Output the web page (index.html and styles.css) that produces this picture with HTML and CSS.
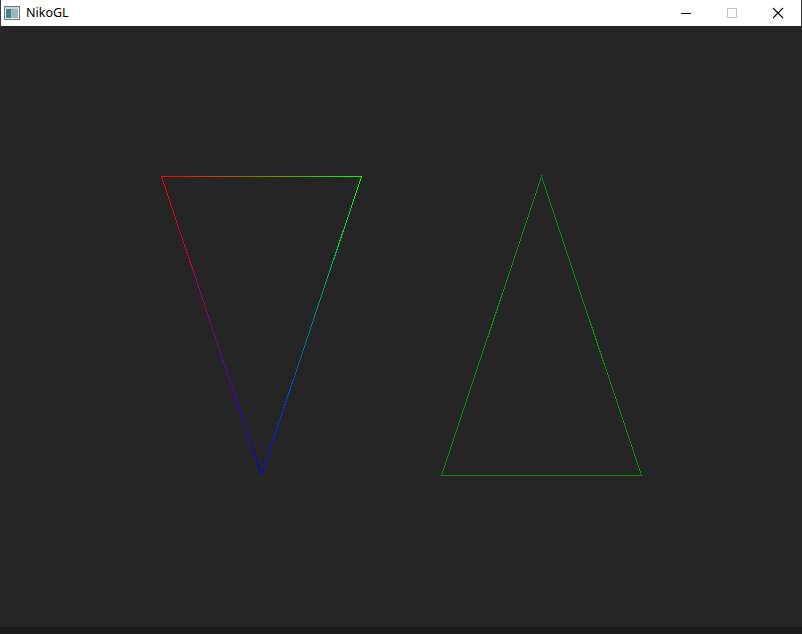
FILE: index.html
```html
<!DOCTYPE html>
<html>
<head>
<meta charset="utf-8">
<title>NikoGL</title>
<link rel="stylesheet" href="styles.css">
</head>
<body>
<div class="window">
  <div class="titlebar">
    <div class="app">
      <svg class="app-icon" width="16" height="14" viewBox="0 0 16 14">
        <rect x="0.5" y="0.5" width="15" height="13" fill="#e8eef0" stroke="#6d7b80"/>
        <rect x="2" y="3" width="5" height="9" fill="#3d8a8a"/>
        <rect x="7" y="3" width="7" height="9" fill="#9fb6c0"/>
        <rect x="1" y="1" width="14" height="2" fill="#c8d4d8"/>
      </svg>
      <span class="title">NikoGL</span>
    </div>
    <div class="controls">
      <div class="ctl">
        <svg width="12" height="12" viewBox="0 0 12 12"><path d="M1 6.5H11" stroke="#000" stroke-width="1"/></svg>
      </div>
      <div class="ctl">
        <svg width="12" height="12" viewBox="0 0 12 12"><rect x="1.5" y="1.5" width="9" height="9" fill="none" stroke="#c4c4c4"/></svg>
      </div>
      <div class="ctl">
        <svg width="12" height="12" viewBox="0 0 12 12"><path d="M1 1L11 11M11 1L1 11" stroke="#000" stroke-width="1.1"/></svg>
      </div>
    </div>
  </div>
  <div class="canvas">
    <svg class="scene" width="802" height="601" viewBox="0 0 802 601">
      <defs>
        <linearGradient id="gTop" gradientUnits="userSpaceOnUse" x1="161" y1="150" x2="361" y2="150">
          <stop offset="0" stop-color="#ff0000"/>
          <stop offset="1" stop-color="#00ff00"/>
        </linearGradient>
        <linearGradient id="gLeft" gradientUnits="userSpaceOnUse" x1="161" y1="150" x2="261" y2="448">
          <stop offset="0" stop-color="#ff0000"/>
          <stop offset="1" stop-color="#0000ff"/>
        </linearGradient>
        <linearGradient id="gRight" gradientUnits="userSpaceOnUse" x1="361" y1="150" x2="261" y2="448">
          <stop offset="0" stop-color="#00ff00"/>
          <stop offset="1" stop-color="#0000ff"/>
        </linearGradient>
      </defs>
      <g shape-rendering="crispEdges" stroke-width="1" fill="none">
        <line x1="161.5" y1="150.5" x2="361.5" y2="150.5" stroke="url(#gTop)"/>
        <line x1="161.5" y1="150.5" x2="261.5" y2="448.5" stroke="url(#gLeft)"/>
        <line x1="361.5" y1="150.5" x2="261.5" y2="448.5" stroke="url(#gRight)"/>
        <polygon points="541.5,150.5 641.5,449.5 441.5,449.5" stroke="#0a8a0a"/>
      </g>
    </svg>
  </div>
  <div class="bottom"></div>
</div>
</body>
</html>
```

FILE: styles.css
```css
html, body {
  margin: 0;
  padding: 0;
  background: #262626;
}
.window {
  width: 802px;
  height: 634px;
  display: flex;
  flex-direction: column;
  overflow: hidden;
}
.titlebar {
  height: 26px;
  flex: 0 0 26px;
  background: #ffffff;
  display: flex;
  align-items: center;
  justify-content: space-between;
  border-left: 1px solid #3a3a3a;
  border-right: 1px solid #3a3a3a;
  box-sizing: border-box;
}
.app {
  display: flex;
  align-items: center;
  gap: 6px;
  padding-left: 3px;
}
.app-icon {
  display: block;
}
.title {
  font-family: "Noto Sans", "Open Sans", sans-serif;
  font-size: 12.5px;
  color: #000;
  line-height: 16px;
}
.controls {
  display: flex;
  height: 26px;
}
.ctl {
  width: 46px;
  height: 26px;
  display: flex;
  align-items: center;
  justify-content: center;
}
.ctl svg {
  display: block;
}
.canvas {
  flex: 0 0 601px;
  height: 601px;
  background: #252525;
}
.scene {
  display: block;
}
.bottom {
  flex: 1;
  background: #1b1b1b;
}
```
